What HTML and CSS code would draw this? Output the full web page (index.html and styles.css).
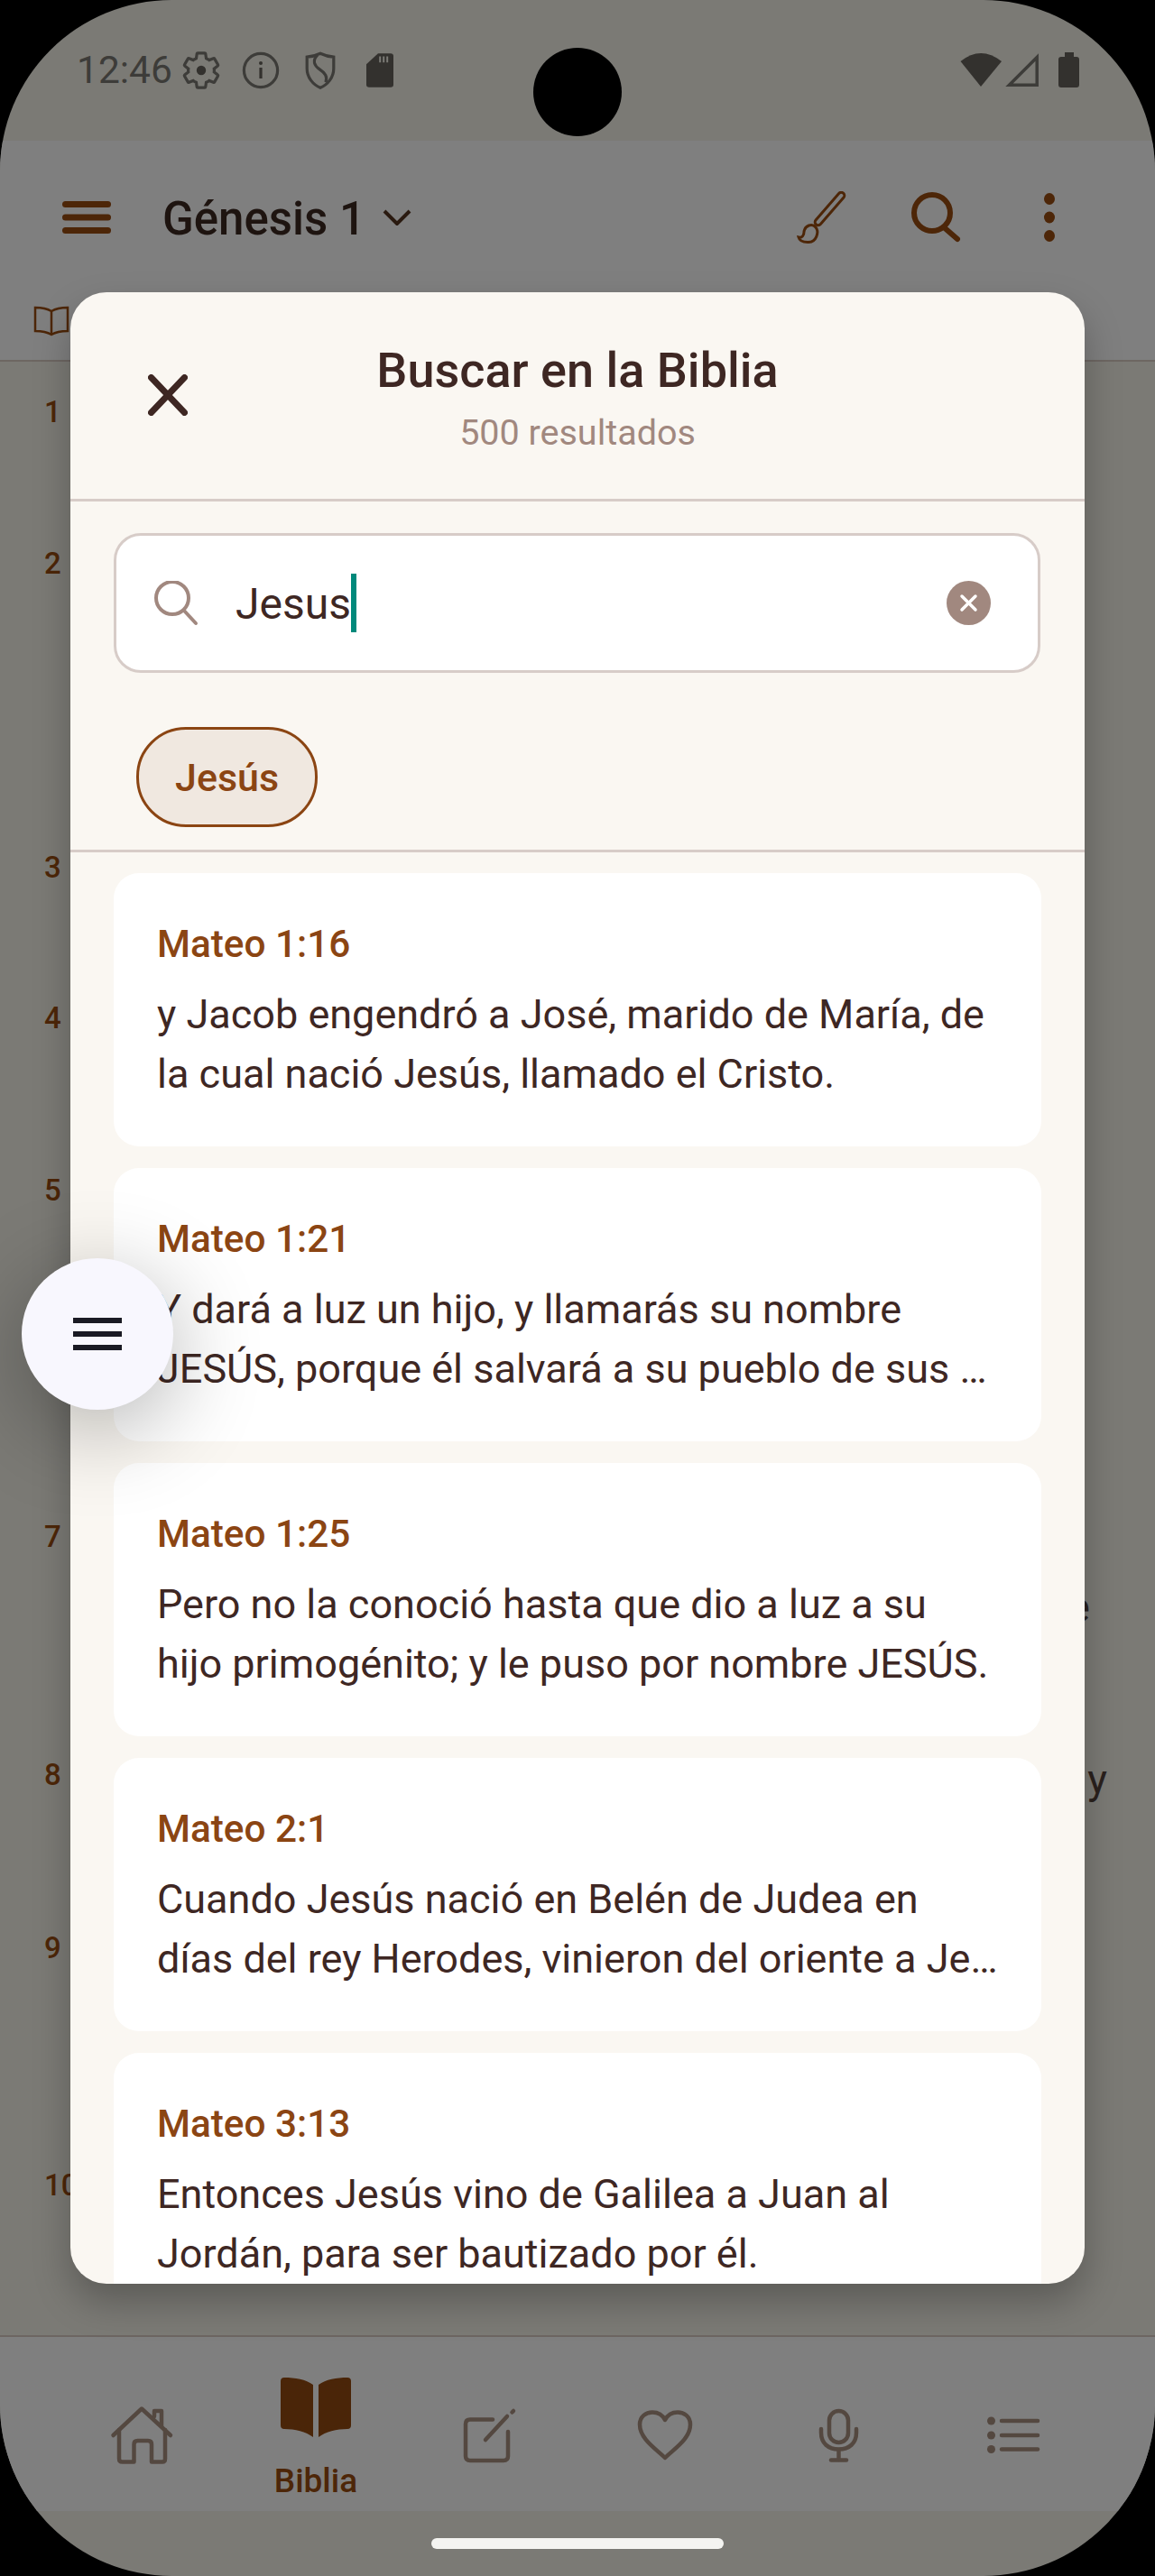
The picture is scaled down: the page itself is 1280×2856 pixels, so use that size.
FILE: index.html
```html
<!DOCTYPE html>
<html lang="es">

<head>
    <meta charset="UTF-8">
    <meta name="viewport" content="width=device-width, initial-scale=1.0">
    <title>Buscar en la Biblia</title>
    <link rel="stylesheet" href="styles.css">
</head>

<body>
    <div class="screen">
        <!-- Status bar -->
        <div class="status">
            <span class="clock">12:46</span>
            <svg class="status-icon" viewBox="0 0 24 24"><path class="line-thin" d="M19.14 12.94c.04-.3.06-.61.06-.94 0-.32-.02-.64-.07-.94l2.03-1.58c.18-.14.23-.41.12-.61l-1.92-3.32c-.12-.22-.37-.29-.59-.22l-2.39.96c-.5-.38-1.03-.7-1.62-.94l-.36-2.54c-.04-.24-.24-.41-.48-.41h-3.84c-.24 0-.43.17-.47.41l-.36 2.54c-.59.24-1.13.57-1.62.94l-2.39-.96c-.22-.08-.47 0-.59.22L2.74 8.87c-.12.21-.08.47.12.61l2.03 1.58c-.05.3-.09.63-.09.94s.02.64.07.94l-2.03 1.58c-.18.14-.23.41-.12.61l1.92 3.32c.12.22.37.29.59.22l2.39-.96c.5.38 1.03.7 1.62.94l.36 2.54c.05.24.24.41.48.41h3.84c.24 0 .44-.17.47-.41l.36-2.54c.59-.24 1.13-.56 1.62-.94l2.39.96c.22.08.47 0 .59-.22l1.92-3.32c.12-.22.07-.47-.12-.61l-2.01-1.58z"/><circle class="solid" cx="12" cy="12" r="2.6"/></svg>
            <svg class="status-icon" viewBox="0 0 24 24"><circle class="line-thin" cx="12" cy="12" r="9.3"/><rect class="solid" x="11.2" y="10.5" width="1.6" height="6"/><circle class="solid" cx="12" cy="8" r="1"/></svg>
            <svg class="status-icon" viewBox="0 0 24 24"><path class="line-thin" d="M12 2.6C14.5 3.8 17 4.4 19.4 4.6V11C19.4 16 16 20 12 21.6C8 20 4.6 16 4.6 11V4.6C7 4.4 9.5 3.8 12 2.6Z"/><path class="line-thin" d="M10.4 3.6C7.4 6.6 8.6 9.4 11.6 11.4C14.8 13.5 16 15.4 15 18.6"/></svg>
            <svg class="status-icon" viewBox="0 0 24 24"><path class="solid" d="M11 2.6H18C18.9 2.6 19.5 3.2 19.5 4V20C19.5 20.9 18.9 21.4 18 21.4H6C5.1 21.4 4.5 20.9 4.5 20V8.6Z"/><path class="sd-pins" d="M11.6 4.2H12.6V7.6H11.6ZM13.6 4.2H14.6V7.6H13.6ZM15.6 4.2H16.6V7.6H15.6Z"/></svg>
            <svg class="status-right" viewBox="0 0 136 48">
                <path class="solid" d="M2.5 14Q25 -4 48 14L25 42Z"/>
                <path class="signal" d="M87.2 9.5V40.2H56.5Z"/>
                <path class="solid" d="M118 4H128V9H131Q134 9 134 12V40Q134 43 131 43H114Q111 43 111 40V12Q111 9 114 9H118Z"/>
            </svg>
        </div>

        <!-- App bar behind the dialog -->
        <div class="appbar">
            <div class="toolbar">
                <svg class="menu-icon" viewBox="0 0 54 36"><rect width="54" height="7" rx="3.5"/><rect y="14.5" width="54" height="7" rx="3.5"/><rect y="29" width="54" height="7" rx="3.5"/></svg>
                <span class="book-title">Génesis 1</span>
                <svg class="chevron" viewBox="0 0 32 18"><path d="M2 2L16 16L30 2"/></svg>
                <svg class="brush" viewBox="0 0 58 58">
                    <rect x="13.5" y="16" width="46" height="7" rx="3.5" transform="rotate(-49 36.5 19.5)"/>
                    <path d="M2 51C6 52 8 49 8 45C9 38 17 35 21 40C25 45 22 57 12 56.5C7 56.5 3 55 2 51Z"/>
                </svg>
                <svg class="search-big" viewBox="0 0 58 56"><circle cx="25" cy="23" r="20"/><path d="M38 39L53 52"/></svg>
                <svg class="dots" viewBox="0 0 12 54"><ellipse cx="6" cy="6.5" rx="6" ry="6.5"/><ellipse cx="6" cy="27" rx="6" ry="6.5"/><ellipse cx="6" cy="47.5" rx="6" ry="6.5"/></svg>
            </div>
            <div class="tabs">
                <svg class="tab-book" viewBox="0 0 40 34"><path d="M20 6C15 3 8 2 2 2V28C8 28 15 29 20 32C25 29 32 28 38 28V2C32 2 25 3 20 6V32"/></svg>
            </div>
        </div>

        <!-- Verse numbers of the chapter -->
        <div class="verses">
            <div class="verse verse-1"><span class="num">1</span></div>
            <div class="verse verse-2"><span class="num">2</span></div>
            <div class="verse verse-3"><span class="num">3</span></div>
            <div class="verse verse-4"><span class="num">4</span></div>
            <div class="verse verse-5"><span class="num">5</span></div>
            <div class="verse verse-6"><span class="num">6</span></div>
            <div class="verse verse-7"><span class="num">7</span><span class="verse-text">que</span></div>
            <div class="verse verse-8"><span class="num">8</span><span class="verse-text">y</span></div>
            <div class="verse verse-9"><span class="num">9</span></div>
            <div class="verse"><span class="num">10</span></div>
        </div>

        <!-- Bottom navigation -->
        <div class="nav">
            <div class="nav-item">
                <svg class="nav-icon" viewBox="0 0 72 72"><path d="M4.5 36L36 6.5L68 36"/><path d="M11 30V62Q11 65.5 14.5 65.5H27.5V46Q27.5 42 31.5 42H43Q47 42 47 46V65.5H59Q62 65.5 62 62V30"/><path d="M50 15V9H58V26"/></svg>
            </div>
            <div class="nav-item active">
                <svg class="nav-bible" viewBox="0 0 78 66"><path d="M4 0C16 0 28 2 36 8V66C28 60 16 57 4 57Q0 57 0 53V4Q0 0 4 0Z"/><path d="M74 0C62 0 50 2 42 8V66C50 60 62 57 74 57Q78 57 78 53V4Q78 0 74 0Z"/></svg>
                <span class="nav-label">Biblia</span>
            </div>
            <div class="nav-item">
                <svg class="nav-icon" viewBox="0 0 72 72"><path d="M39 18.5H14Q9 18.5 9 23.5V59Q9 64 14 64H51Q56 64 56 59V32"/><path d="M31 41L55 15"/><path d="M60.5 10.5L62 9"/></svg>
            </div>
            <div class="nav-item">
                <svg class="nav-icon" viewBox="0 0 72 72"><path d="M36 61C26 51 8 40 8 24C8 15 15 10.5 22 10.5C28 10.5 33 13 36 19C39 13 44 10.5 50 10.5C57 10.5 64 15 64 24C64 40 46 51 36 61Z"/></svg>
            </div>
            <div class="nav-item">
                <svg class="nav-icon" viewBox="0 0 72 72"><rect x="25" y="9" width="21" height="35" rx="10.5"/><path d="M16 29V33C16 45 24 51.5 35.5 51.5C47 51.5 55 45 55 33V29"/><path d="M35.5 52V63"/><path d="M27 63.5H44"/></svg>
            </div>
            <div class="nav-item">
                <svg class="nav-icon" viewBox="0 0 72 72"><circle class="fill" cx="11.5" cy="20" r="4.5"/><circle class="fill" cx="11.5" cy="36" r="4.5"/><circle class="fill" cx="11.5" cy="51.5" r="4.5"/><path d="M23 20H63"/><path d="M23 36H63"/><path d="M23 51.5H63"/></svg>
            </div>
        </div>
        <div class="gesture"><div class="pill"></div></div>

        <div class="camera"></div>

        <!-- Search dialog -->
        <div class="dialog">
            <div class="dialog-head">
                <svg class="close" viewBox="0 0 44 46"><path d="M3.5 3.5L40.5 42.5"/><path d="M40.5 3.5L3.5 42.5"/></svg>
                <div class="dialog-title">
                    <h1>Buscar en la Biblia</h1>
                    <p>500 resultados</p>
                </div>
            </div>
            <div class="search-box">
                <svg class="search-small" viewBox="0 0 50 50"><circle cx="21" cy="19" r="18"/><path d="M34 33L47 47"/></svg>
                <span class="query">Jesus</span>
                <span class="caret"></span>
                <svg class="clear" viewBox="0 0 49 49"><circle cx="24.5" cy="24.5" r="24.5"/><path d="M17 17L32 32"/><path d="M32 17L17 32"/></svg>
            </div>
            <div class="chips">
                <span class="chip">Jesús</span>
            </div>
            <div class="results">
                <div class="card">
                    <h2>Mateo 1:16</h2>
                    <p>y Jacob engendró a José, marido de María, de<br>la cual nació Jesús, llamado el Cristo.</p>
                </div>
                <div class="card">
                    <h2>Mateo 1:21</h2>
                    <p>Y dará a luz un hijo, y llamarás su nombre<br>JESÚS, porque él salvará a su pueblo de sus …</p>
                </div>
                <div class="card">
                    <h2>Mateo 1:25</h2>
                    <p>Pero no la conoció hasta que dio a luz a su<br>hijo primogénito; y le puso por nombre JESÚS.</p>
                </div>
                <div class="card">
                    <h2>Mateo 2:1</h2>
                    <p>Cuando Jesús nació en Belén de Judea en<br>días del rey Herodes, vinieron del oriente a Je…</p>
                </div>
                <div class="card">
                    <h2>Mateo 3:13</h2>
                    <p>Entonces Jesús vino de Galilea a Juan al<br>Jordán, para ser bautizado por él.</p>
                </div>
            </div>
        </div>

        <!-- Floating menu button -->
        <div class="fab">
            <span></span>
            <span></span>
            <span></span>
        </div>
    </div>
</body>

</html>
```

FILE: styles.css
```css
* {
    box-sizing: border-box;
}

body {
    margin: 0;
    background-color: black;
    font-family: Roboto, "Liberation Sans", sans-serif;
}

h1,
h2,
p {
    margin: 0;
}

svg {
    display: block;
    flex-shrink: 0;
    fill: none;
}

.screen {
    position: relative;
    display: flex;
    flex-direction: column;
    width: 1280px;
    height: 2856px;
    overflow: hidden;
    background-color: #7b7a75;
    border-radius: 190px;
}

/* status bar */
.status {
    display: flex;
    flex-shrink: 0;
    gap: 18px;
    height: 156px;
    padding: 54px 82px 0 85px;
}

.clock {
    width: 96px;
    height: 48px;
    font-size: 42.5px;
    line-height: 48px;
    color: #3d3c39;
}

.status-icon {
    width: 48px;
    height: 48px;
}

.status-right {
    width: 136px;
    height: 48px;
    margin-left: auto;
}

.solid {
    fill: #33312e;
}

.line-thin {
    stroke: #3d3c39;
    stroke-width: 1.6;
}

.sd-pins {
    fill: #7b7a75;
}

.signal {
    stroke: #3d3c39;
    stroke-width: 3.5;
}

/* app bar */
.appbar {
    flex-shrink: 0;
    height: 245px;
    background-color: #7f7f7f;
    border-bottom: 2px solid #6d6662;
}

.toolbar {
    display: flex;
    align-items: center;
    height: 170px;
    padding: 0 111px 0 69px;
}

.menu-icon {
    width: 54px;
    height: 36px;
    fill: #4d2608;
}

.book-title {
    margin: 2px 0 0 57px;
    font-size: 51px;
    font-weight: 500;
    color: #1e1410;
}

.chevron {
    width: 32px;
    height: 18px;
    margin-left: 19px;
    stroke: #2a1a10;
    stroke-width: 4;
}

.brush {
    width: 58px;
    height: 58px;
    margin-left: auto;
    stroke: #4d2608;
    stroke-width: 3;
}

.search-big {
    width: 58px;
    height: 56px;
    margin-left: 67px;
    stroke: #4d2608;
    stroke-width: 6;
    stroke-linecap: round;
}

.dots {
    width: 12px;
    height: 54px;
    margin-left: 91px;
    fill: #4d2608;
}

.tabs {
    padding: 13px 0 0 37px;
}

.tab-book {
    width: 40px;
    height: 34px;
    stroke: #4d2608;
    stroke-width: 2.5;
}

/* verses */
.verses {
    flex: 1;
    min-height: 0;
    overflow: hidden;
}

.verse {
    display: flex;
    align-items: flex-start;
    padding: 38px 53px 0 49px;
}

.verse-1 { height: 168px; }
.verse-2 { height: 337px; }
.verse-3 { height: 167px; }
.verse-4 { height: 191px; }
.verse-5 { height: 192px; }
.verse-6 { height: 192px; }
.verse-7 { height: 264px; }
.verse-8 { height: 192px; }
.verse-9 { height: 263px; }

.num {
    font-size: 33px;
    font-weight: 500;
    line-height: 36px;
    color: #4d2608;
}

.verse-text {
    margin-left: auto;
    font-size: 46px;
    line-height: 64px;
    color: #2a211d;
}

.verse-7 .verse-text {
    margin-top: 64px;
    margin-right: 19px;
}

.verse-8 .verse-text {
    margin-top: -9px;
}

/* bottom nav */
.nav {
    display: grid;
    flex-shrink: 0;
    grid-template-columns: repeat(6, 1fr);
    height: 195px;
    padding: 0 60px;
    background-color: #7f7f7f;
    border-top: 2px solid #6d6662;
}

.nav-item {
    display: flex;
    flex-direction: column;
    align-items: center;
    padding-top: 73px;
}

.nav-item.active {
    padding-top: 45px;
}

.nav-icon {
    width: 72px;
    height: 72px;
    stroke: #544840;
    stroke-width: 4.5;
    stroke-linecap: round;
    stroke-linejoin: round;
}

.nav-icon .fill {
    fill: #544840;
    stroke: none;
}

.nav-bible {
    width: 78px;
    height: 66px;
    fill: #4a2508;
}

.nav-label {
    margin-top: 29px;
    font-size: 37px;
    font-weight: 500;
    line-height: 40px;
    color: #4d2608;
}

.gesture {
    flex-shrink: 0;
    height: 72px;
    padding-top: 30px;
}

.pill {
    width: 324px;
    height: 12px;
    margin: 0 auto;
    background-color: #f4f4f1;
    border-radius: 6px;
}

.camera {
    position: absolute;
    top: 53px;
    left: 591px;
    width: 98px;
    height: 98px;
    background-color: black;
    border-radius: 50%;
}

/* dialog */
.dialog {
    position: absolute;
    top: 324px;
    left: 78px;
    display: flex;
    flex-direction: column;
    width: 1124px;
    height: 2208px;
    overflow: hidden;
    background-color: #faf7f2;
    border-radius: 40px;
    box-shadow: 0 20px 40px rgba(0, 0, 0, 0.25);
}

.dialog-head {
    position: relative;
    flex-shrink: 0;
    height: 232px;
    padding-top: 58px;
    text-align: center;
    border-bottom: 3px solid #d7ccc8;
}

.close {
    position: absolute;
    top: 91px;
    left: 86px;
    width: 44px;
    height: 46px;
    stroke: #3e2723;
    stroke-width: 7;
    stroke-linecap: round;
}

.dialog-title h1 {
    font-size: 54px;
    font-weight: 500;
    line-height: 58px;
    color: #3e2723;
}

.dialog-title p {
    margin-top: 16px;
    font-size: 39.5px;
    line-height: 48px;
    color: #a1887f;
}

.search-box {
    display: flex;
    flex-shrink: 0;
    align-items: center;
    height: 155px;
    margin: 35px 49px 0 48px;
    padding: 0 52px 0 41px;
    background-color: white;
    border: 3px solid #d7ccc8;
    border-radius: 30px;
}

.search-small {
    width: 50px;
    height: 50px;
    stroke: #a1887f;
    stroke-width: 4;
    stroke-linecap: round;
}

.query {
    margin: 2px 0 0 41px;
    font-size: 48px;
    color: #3e2723;
}

.caret {
    width: 6px;
    height: 65px;
    background-color: #00897b;
}

.clear {
    width: 49px;
    height: 49px;
    margin-left: auto;
    fill: #a1887f;
    stroke-linecap: round;
}

.clear path {
    stroke: white;
    stroke-width: 3.5;
}

.chips {
    flex-shrink: 0;
    height: 199px;
    padding: 60px 0 0 73px;
    border-bottom: 3px solid #d7ccc8;
}

.chip {
    display: inline-block;
    height: 111px;
    padding: 0 40px;
    font-size: 43px;
    font-weight: 500;
    line-height: 107px;
    color: #8b4513;
    background-color: #f0e8e0;
    border: 3px solid #8b4513;
    border-radius: 55px;
}

.results {
    display: flex;
    flex: 1;
    flex-direction: column;
    gap: 24px;
    min-height: 0;
    padding: 23px 48px 0;
}

.card {
    flex-shrink: 0;
    height: 303px;
    padding: 54px 48px 0;
    background-color: white;
    border-radius: 28px;
}

.card h2 {
    font-size: 42.3px;
    font-weight: 500;
    line-height: 50px;
    color: #8b4513;
}

.card p {
    margin-top: 20px;
    font-size: 45px;
    line-height: 66px;
    color: #3e2723;
    white-space: nowrap;
}

/* floating button */
.fab {
    position: absolute;
    top: 1395px;
    left: 24px;
    display: flex;
    flex-direction: column;
    gap: 9px;
    align-items: center;
    justify-content: center;
    width: 168px;
    height: 168px;
    background-color: #f8f7fe;
    border-radius: 50%;
    box-shadow: 0 22px 100px rgba(0, 0, 0, 0.3);
}

.fab span {
    width: 54px;
    height: 6px;
    background-color: #1a1a24;
}
```
